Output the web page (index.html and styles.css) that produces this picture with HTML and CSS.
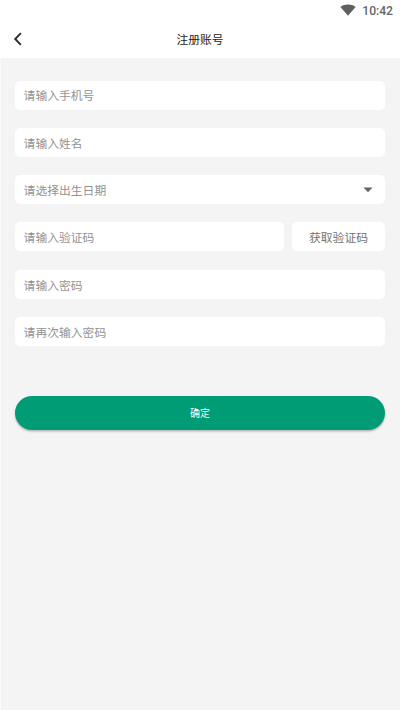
FILE: index.html
```html
<!DOCTYPE html>
<html lang="zh-CN">
<head>
<meta charset="utf-8">
<title>注册账号</title>
<link rel="stylesheet" href="styles.css">
</head>
<body>
<div class="status">
  <svg class="wifi" width="16" height="12" viewBox="0 0 16 12"><path d="M.4 2.9C4.5-.3 11.500-.3 15.600 2.900L8 11.700Z" fill="#606060"/></svg>
  <span class="clock">10:42</span>
</div>
<header class="bar">
  <svg class="back" width="10" height="14" viewBox="0 0 10 14"><path d="M7.900 1.200 2.200 7l5.700 5.800" fill="none" stroke="#2c2c2c" stroke-width="1.900"/></svg>
  <h1 class="title">注册账号</h1>
</header>
<main class="form">
  <div class="field">请输入手机号</div>
  <div class="field">请输入姓名</div>
  <div class="field select">请选择出生日期
    <svg width="10" height="6" viewBox="0 0 10 6"><path d="M.4.500h9.200L5 5.200Z" fill="#666"/></svg>
  </div>
  <div class="row">
    <div class="field">请输入验证码</div>
    <button class="code">获取验证码</button>
  </div>
  <div class="field">请输入密码</div>
  <div class="field">请再次输入密码</div>
  <button class="submit">确定</button>
</main>
</body>
</html>
```
FILE: styles.css
```css
* { box-sizing: border-box; }
body {
  margin: 0;
  height: 710px;
  background: linear-gradient(90deg, #fafafa 1.500px, #f4f4f4 1.500px);
  font-family: Roboto, "Noto Sans CJK SC", sans-serif;
  overflow: hidden;
}
.status {
  height: 20px;
  padding: 1px 7px 0 0;
  display: flex;
  justify-content: flex-end;
  align-items: center;
  gap: 6px;
  background: #fff;
}
.wifi { margin-top: -2px; }
.clock {
  font-size: 12.2px;
  font-weight: 500;
  line-height: 18px;
  letter-spacing: -.05px;
  color: #666;
}
.bar {
  height: 37.500px;
  padding: 0 14px;
  display: grid;
  grid-template-columns: 10px 1fr 10px;
  align-items: center;
  background: #fff;
}
.back { margin-left: -1px; }
.title {
  margin: 0;
  padding-top: 2.500px;
  text-align: center;
  font-size: 11.800px;
  font-weight: 400;
  line-height: 18px;
  color: #1c1c1c;
}
.form {
  padding: 23.100px 15px 0;
  display: flex;
  flex-direction: column;
  gap: 18.050px;
}
.field {
  height: 29.200px;
  padding: 2px 8.600px 0;
  flex-shrink: 0;
  border-radius: 5px;
  background: #fff;
  color: #929292;
  font-size: 11.800px;
  line-height: 29.200px;
}
.field:first-child { padding-top: 1.600px; }
.select {
  display: flex;
  align-items: center;
  justify-content: space-between;
  padding-top: 3px;
  padding-right: 12px;
}
.select svg { margin-top: -3px; }
.row { display: flex; gap: 8px; }
.row .field { flex: 1; padding-top: 1.600px; }
.code {
  width: 93px;
  height: 29.200px;
  padding: 3px 0 0;
  border: 0;
  border-radius: 5px;
  background: #fff;
  color: #727272;
  font: inherit;
  font-size: 11.800px;
  line-height: 26.200px;
}
.submit {
  height: 33.500px;
  margin-top: 32px;
  padding: 0;
  border: 0;
  border-radius: 17px;
  background: #009c75;
  box-shadow: 0 1.500px 2px rgba(0, 0, 0, .26);
  color: #fff;
  font: inherit;
  font-size: 10px;
}
```
